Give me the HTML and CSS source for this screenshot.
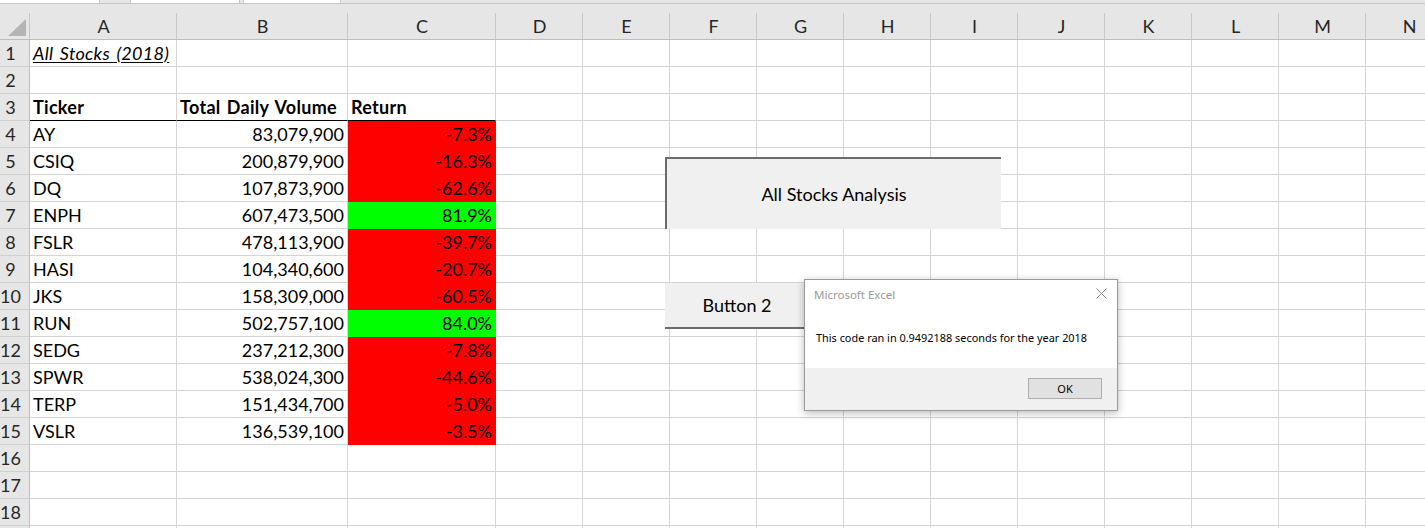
FILE: index.html
```html
<!DOCTYPE html>
<html lang="en">
<head>
<meta charset="utf-8">
<title>Excel - All Stocks</title>
<link rel="stylesheet" href="styles.css">
</head>
<body>
<div class="strip"><span class="tab t1"></span><span class="gapbox g1"></span><span class="tab t2"></span><span class="gapbox g2"></span><span class="tab t3"></span></div>
<div class="sheet">
  <div class="corner"><svg width="30" height="36" viewBox="0 0 30 36"><polygon points="8,32 26,32 26,15" fill="#b4b4b4"/></svg></div>
  <div class="ch">A</div><div class="ch">B</div><div class="ch">C</div><div class="ch">D</div><div class="ch">E</div><div class="ch">F</div><div class="ch">G</div><div class="ch">H</div><div class="ch">I</div><div class="ch">J</div><div class="ch">K</div><div class="ch">L</div><div class="ch">M</div><div class="ch">N</div>

  <div class="rh">1</div><div class="c title">All Stocks (2018)</div><div class="c"></div><div class="c"></div><div class="c"></div><div class="c"></div><div class="c"></div><div class="c"></div><div class="c"></div><div class="c"></div><div class="c"></div><div class="c"></div><div class="c"></div><div class="c"></div><div class="c"></div>
  <div class="rh">2</div><div class="c"></div><div class="c"></div><div class="c"></div><div class="c"></div><div class="c"></div><div class="c"></div><div class="c"></div><div class="c"></div><div class="c"></div><div class="c"></div><div class="c"></div><div class="c"></div><div class="c"></div><div class="c"></div>
  <div class="rh">3</div><div class="c hd">Ticker</div><div class="c hd">Total Daily Volume</div><div class="c hd">Return</div><div class="c"></div><div class="c"></div><div class="c"></div><div class="c"></div><div class="c"></div><div class="c"></div><div class="c"></div><div class="c"></div><div class="c"></div><div class="c"></div><div class="c"></div>
  <div class="rh">4</div><div class="c">AY</div><div class="c num">83,079,900</div><div class="c num neg">-7.3%</div><div class="c"></div><div class="c"></div><div class="c"></div><div class="c"></div><div class="c"></div><div class="c"></div><div class="c"></div><div class="c"></div><div class="c"></div><div class="c"></div><div class="c"></div>
  <div class="rh">5</div><div class="c">CSIQ</div><div class="c num">200,879,900</div><div class="c num neg">-16.3%</div><div class="c"></div><div class="c"></div><div class="c"></div><div class="c"></div><div class="c"></div><div class="c"></div><div class="c"></div><div class="c"></div><div class="c"></div><div class="c"></div><div class="c"></div>
  <div class="rh">6</div><div class="c">DQ</div><div class="c num">107,873,900</div><div class="c num neg">-62.6%</div><div class="c"></div><div class="c"></div><div class="c"></div><div class="c"></div><div class="c"></div><div class="c"></div><div class="c"></div><div class="c"></div><div class="c"></div><div class="c"></div><div class="c"></div>
  <div class="rh">7</div><div class="c">ENPH</div><div class="c num">607,473,500</div><div class="c num pos">81.9%</div><div class="c"></div><div class="c"></div><div class="c"></div><div class="c"></div><div class="c"></div><div class="c"></div><div class="c"></div><div class="c"></div><div class="c"></div><div class="c"></div><div class="c"></div>
  <div class="rh">8</div><div class="c">FSLR</div><div class="c num">478,113,900</div><div class="c num neg">-39.7%</div><div class="c"></div><div class="c"></div><div class="c"></div><div class="c"></div><div class="c"></div><div class="c"></div><div class="c"></div><div class="c"></div><div class="c"></div><div class="c"></div><div class="c"></div>
  <div class="rh">9</div><div class="c">HASI</div><div class="c num">104,340,600</div><div class="c num neg">-20.7%</div><div class="c"></div><div class="c"></div><div class="c"></div><div class="c"></div><div class="c"></div><div class="c"></div><div class="c"></div><div class="c"></div><div class="c"></div><div class="c"></div><div class="c"></div>
  <div class="rh">10</div><div class="c">JKS</div><div class="c num">158,309,000</div><div class="c num neg">-60.5%</div><div class="c"></div><div class="c"></div><div class="c"></div><div class="c"></div><div class="c"></div><div class="c"></div><div class="c"></div><div class="c"></div><div class="c"></div><div class="c"></div><div class="c"></div>
  <div class="rh">11</div><div class="c">RUN</div><div class="c num">502,757,100</div><div class="c num pos">84.0%</div><div class="c"></div><div class="c"></div><div class="c"></div><div class="c"></div><div class="c"></div><div class="c"></div><div class="c"></div><div class="c"></div><div class="c"></div><div class="c"></div><div class="c"></div>
  <div class="rh">12</div><div class="c">SEDG</div><div class="c num">237,212,300</div><div class="c num neg">-7.8%</div><div class="c"></div><div class="c"></div><div class="c"></div><div class="c"></div><div class="c"></div><div class="c"></div><div class="c"></div><div class="c"></div><div class="c"></div><div class="c"></div><div class="c"></div>
  <div class="rh">13</div><div class="c">SPWR</div><div class="c num">538,024,300</div><div class="c num neg">-44.6%</div><div class="c"></div><div class="c"></div><div class="c"></div><div class="c"></div><div class="c"></div><div class="c"></div><div class="c"></div><div class="c"></div><div class="c"></div><div class="c"></div><div class="c"></div>
  <div class="rh">14</div><div class="c">TERP</div><div class="c num">151,434,700</div><div class="c num neg">-5.0%</div><div class="c"></div><div class="c"></div><div class="c"></div><div class="c"></div><div class="c"></div><div class="c"></div><div class="c"></div><div class="c"></div><div class="c"></div><div class="c"></div><div class="c"></div>
  <div class="rh">15</div><div class="c">VSLR</div><div class="c num">136,539,100</div><div class="c num neg">-3.5%</div><div class="c"></div><div class="c"></div><div class="c"></div><div class="c"></div><div class="c"></div><div class="c"></div><div class="c"></div><div class="c"></div><div class="c"></div><div class="c"></div><div class="c"></div>
  <div class="rh">16</div><div class="c"></div><div class="c"></div><div class="c"></div><div class="c"></div><div class="c"></div><div class="c"></div><div class="c"></div><div class="c"></div><div class="c"></div><div class="c"></div><div class="c"></div><div class="c"></div><div class="c"></div><div class="c"></div>
  <div class="rh">17</div><div class="c"></div><div class="c"></div><div class="c"></div><div class="c"></div><div class="c"></div><div class="c"></div><div class="c"></div><div class="c"></div><div class="c"></div><div class="c"></div><div class="c"></div><div class="c"></div><div class="c"></div><div class="c"></div>
  <div class="rh">18</div><div class="c"></div><div class="c"></div><div class="c"></div><div class="c"></div><div class="c"></div><div class="c"></div><div class="c"></div><div class="c"></div><div class="c"></div><div class="c"></div><div class="c"></div><div class="c"></div><div class="c"></div><div class="c"></div>
  <div class="rh"></div><div class="c"></div><div class="c"></div><div class="c"></div><div class="c"></div><div class="c"></div><div class="c"></div><div class="c"></div><div class="c"></div><div class="c"></div><div class="c"></div><div class="c"></div><div class="c"></div><div class="c"></div><div class="c"></div>
</div>

<div class="btn btn-main">All Stocks Analysis</div>
<div class="btn btn-two">Button 2</div>

<div class="dialog">
  <div class="dlg-title">
    <span>Microsoft Excel</span>
    <svg class="dlg-close" width="11" height="11" viewBox="0 0 11 11"><path d="M0.5 0.5 L10.5 10.5 M10.5 0.5 L0.5 10.5" stroke="#8a8a8a" stroke-width="1" fill="none"/></svg>
  </div>
  <div class="dlg-body">This code ran in 0.9492188 seconds for the year 2018</div>
  <div class="dlg-foot"><div class="dlg-ok">OK</div></div>
</div>
</body>
</html>
```

FILE: styles.css
```css
html, body {
  margin: 0;
  padding: 0;
}
body {
  width: 1425px;
  height: 528px;
  overflow: hidden;
  position: relative;
  background: #fff;
  font-family: Lato, "Liberation Sans", sans-serif;
  color: #000;
}

/* top strip with sheet tabs of the ribbon above */
.strip {
  height: 3px;
  background: #e6e6e6;
  border-bottom: 1px solid #c6c6c6;
  display: flex;
}
.tab {
  display: block;
  height: 3px;
  background: #fff;
  border-right: 1px solid #c6c6c6;
}
.t1 { width: 99px; }
.t2 { width: 108px; border-left: 1px solid #c6c6c6; }
.t3 { width: 96px; border-left: 1px solid #c6c6c6; }
.g1 { width: 30px; }
.g2 { width: 3px; }

.sheet {
  display: grid;
  grid-template-columns: 30px 147px 171px 148px repeat(11, 87px);
  grid-template-rows: 36px;
  grid-auto-rows: 27px;
}

.corner {
  background: #e6e6e6 linear-gradient(#c6c6c6, #c6c6c6) no-repeat right bottom / 1px 26px;
  border-bottom: 1px solid #bdbdbd;
  box-sizing: border-box;
}
.corner svg { display: block; }

.ch {
  box-sizing: border-box;
  background: #e6e6e6 linear-gradient(#c9c9c9, #c9c9c9) no-repeat right bottom / 1px 26px;
  border-bottom: 1px solid #bdbdbd;
  padding-top: 10px;
  line-height: 25px;
  text-align: center;
  font-size: 18px;
  color: #262626;
}

.rh {
  box-sizing: border-box;
  background: #e6e6e6;
  border-right: 1px solid #bdbdbd;
  border-bottom: 1px solid #cfcfcf;
  text-align: center;
  padding-right: 8px;
  font-size: 18px;
  line-height: 26px;
  color: #262626;
}

.c {
  box-sizing: border-box;
  border-right: 1px solid #d4d4d4;
  border-bottom: 1px solid #d4d4d4;
  padding: 0 3px;
  font-size: 18px;
  line-height: 26px;
  white-space: nowrap;
}
.title {
  font-style: italic;
  text-decoration: underline;
  text-underline-offset: 2px;
  letter-spacing: 0.3px;
  word-spacing: 2px;
}
.hd {
  font-weight: bold;
  border-bottom-color: #000;
  letter-spacing: 0.3px;
  word-spacing: 1.5px;
}
.num { text-align: right; }
.neg { background: #ff0000; border-color: #ff0000; }
.pos { background: #00ff00; border-color: #00ff00; }

/* form-control buttons floating over the sheet */
.btn {
  position: absolute;
  box-sizing: border-box;
  background: #f0f0f0;
  display: flex;
  align-items: center;
  justify-content: center;
  font-size: 18px;
  color: #000;
}
.btn-main {
  left: 665px;
  top: 157px;
  width: 336px;
  height: 72px;
  border-top: 2px solid #6b6b6b;
  border-left: 2px solid #6b6b6b;
}
.btn-two {
  left: 665px;
  top: 283px;
  width: 146px;
  height: 46px;
  border-bottom: 2px solid #6b6b6b;
  border-right: 2px solid #6b6b6b;
}

/* message box */
.dialog {
  position: absolute;
  left: 804px;
  top: 279px;
  width: 314px;
  height: 132px;
  box-sizing: border-box;
  background: #fff;
  border: 1px solid #9a9a9a;
  box-shadow: 0 2px 8px rgba(0, 0, 0, 0.28);
  display: flex;
  flex-direction: column;
  font-family: "Noto Sans", "Open Sans", sans-serif;
}
.dlg-title {
  height: 28px;
  display: flex;
  align-items: center;
  justify-content: space-between;
  padding: 0 10px 0 9px;
  font-size: 11.5px;
  color: #999;
}
.dlg-close { display: block; margin-top: -1px; }
.dlg-body {
  height: 60px;
  box-sizing: border-box;
  padding: 22px 0 0 11px;
  font-size: 10.9px;
  line-height: 16px;
  color: #000;
}
.dlg-foot {
  flex: 1;
  background: #f0f0f0;
  display: flex;
  justify-content: flex-end;
  align-items: flex-start;
  padding: 10px 15px 0 0;
}
.dlg-ok {
  width: 74px;
  height: 21px;
  box-sizing: border-box;
  border: 1px solid #adadad;
  background: #e1e1e1;
  display: flex;
  align-items: center;
  justify-content: center;
  font-size: 11px;
  color: #000;
}
```
